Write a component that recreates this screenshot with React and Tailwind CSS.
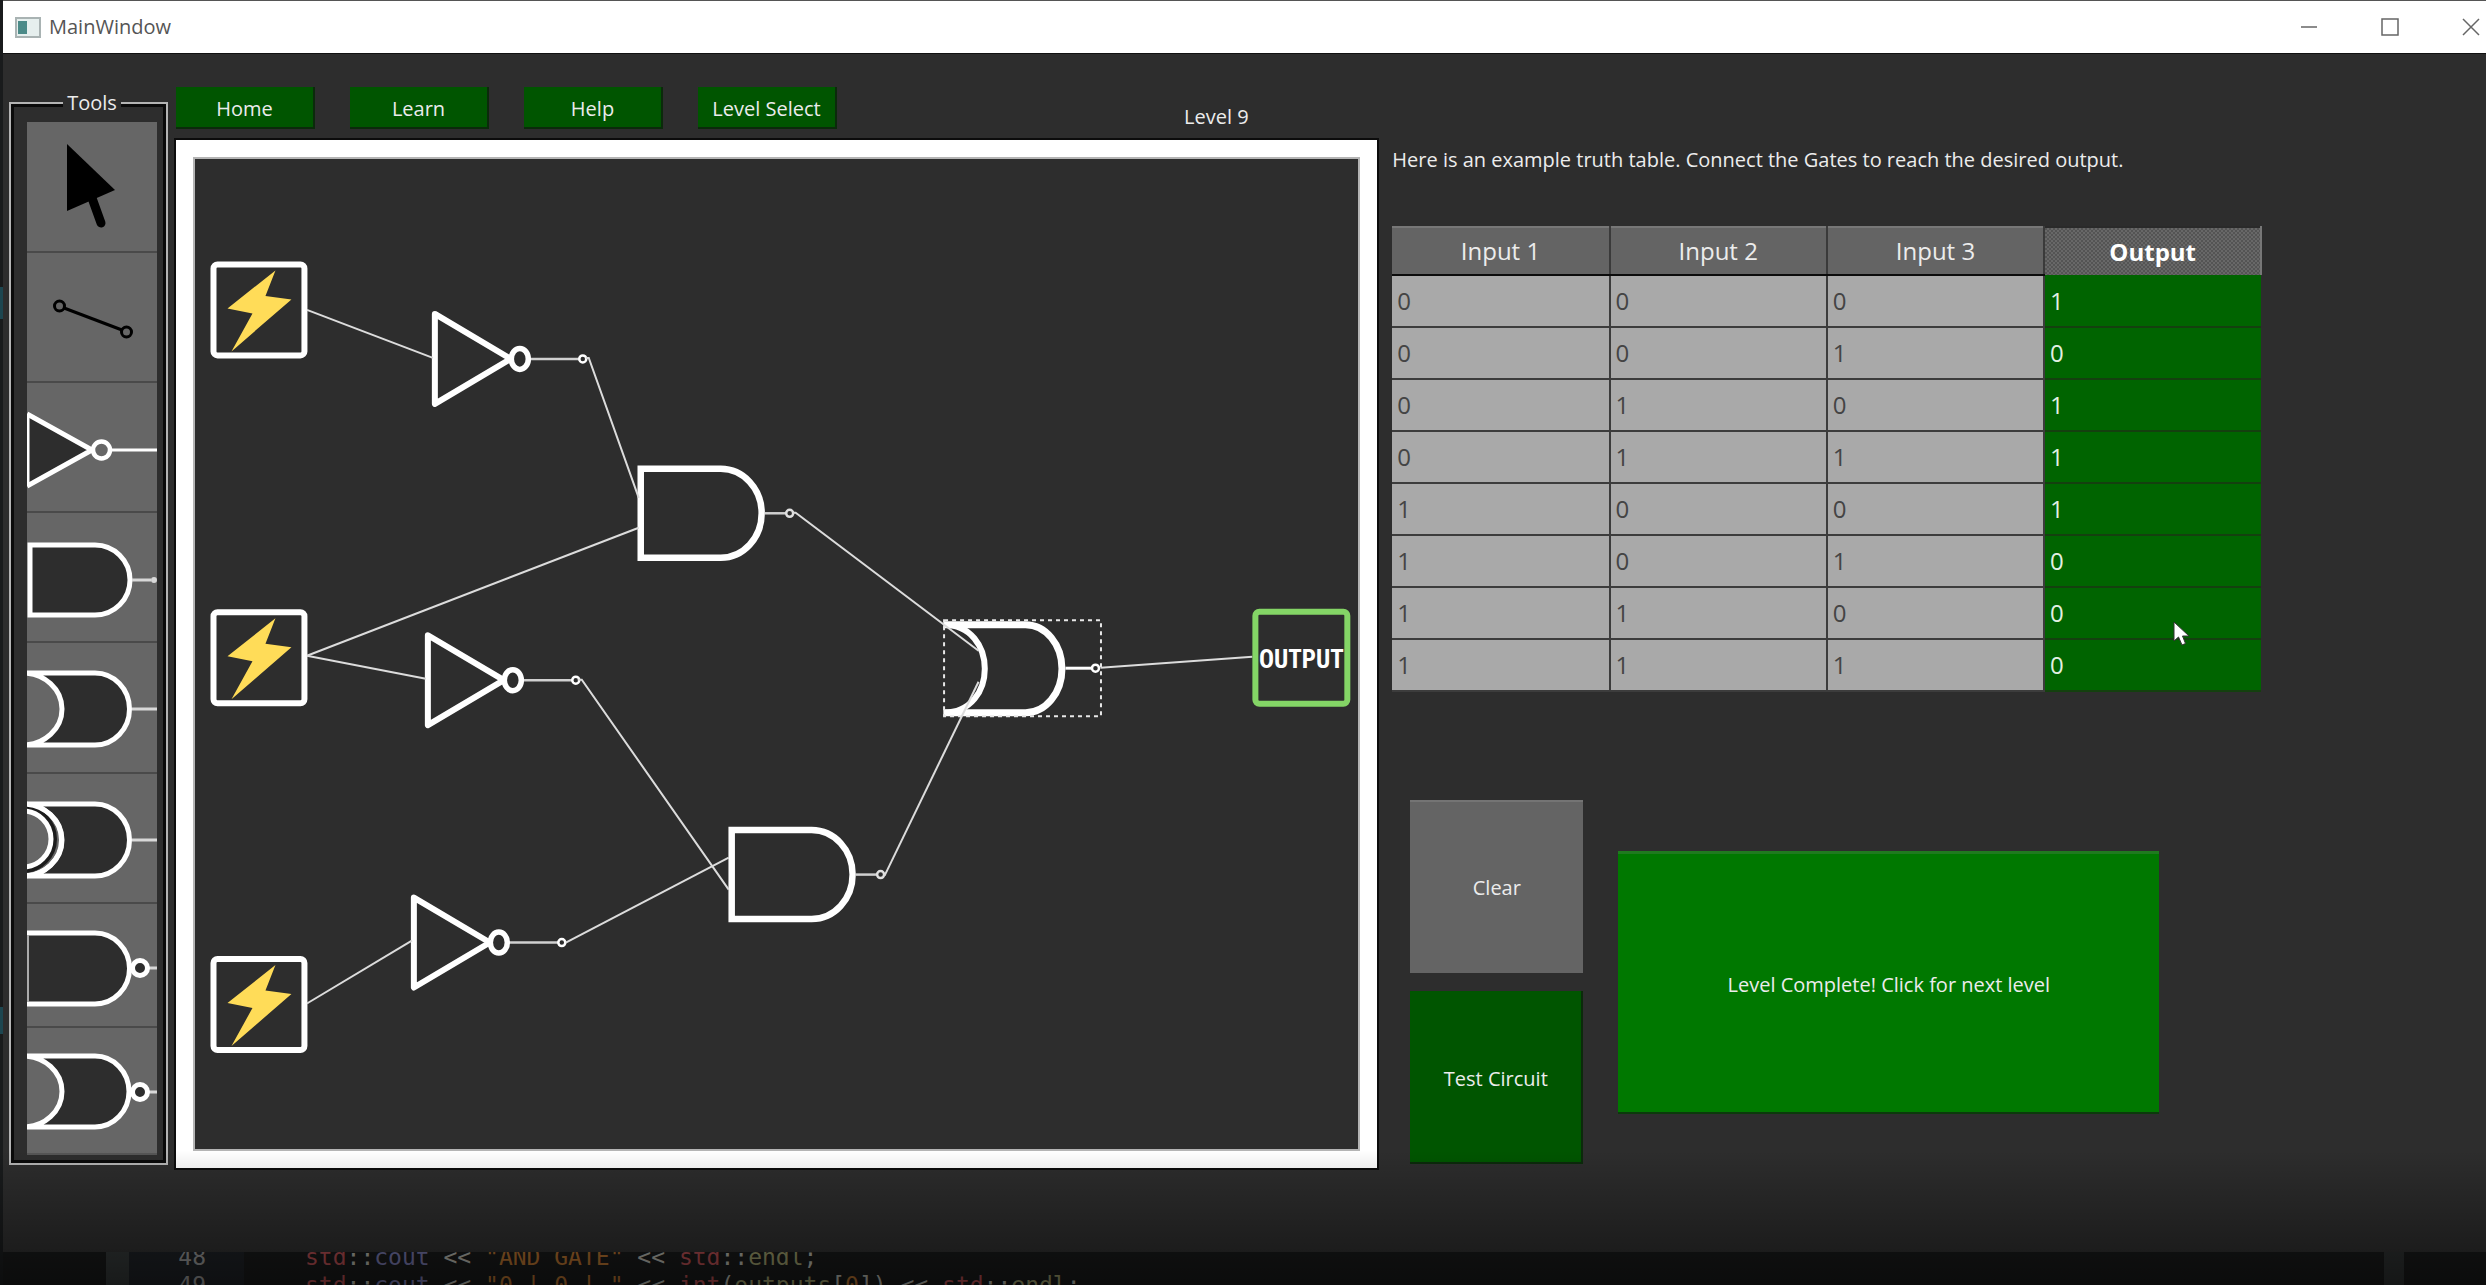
import React from "react";

const DARK = "#2d2d2d";

const NAV = ["Home", "Learn", "Help", "Level Select"];

const HEADERS = ["Input 1", "Input 2", "Input 3"];

const ROWS = [
  [0, 0, 0, 1],
  [0, 0, 1, 0],
  [0, 1, 0, 1],
  [0, 1, 1, 1],
  [1, 0, 0, 1],
  [1, 0, 1, 0],
  [1, 1, 0, 0],
  [1, 1, 1, 0],
];

function ToolArt({ kind }) {
  const line = { stroke: "#fff", strokeWidth: 5, fill: DARK };
  const lead = { stroke: "#d8d8d8", strokeWidth: 3 };
  switch (kind) {
    case "Select":
      return (
        <g>
          <path d="M40 22 L88 68 L40 89 Z" fill="#000" />
          <path d="M65 76 L74 101" stroke="#000" strokeWidth="9" strokeLinecap="round" />
        </g>
      );
    case "Wire":
      return (
        <g fill="none" stroke="#000" strokeWidth="3">
          <circle cx="32.5" cy="53" r="5" />
          <circle cx="99.5" cy="79" r="5" />
          <path d="M37 55 L95 77" />
        </g>
      );
    case "NOT":
      return (
        <g>
          <path d="M1 31 L65 67 L1 103 Z" fill={DARK} />
          <path d="M1 31 V103" stroke="#fff" strokeWidth="3" />
          <path d="M0 31 L65 67 L0 103" fill="none" stroke="#fff" strokeWidth="5" />
          <path d="M84 67 H130" stroke="#fff" strokeWidth="3" />
          <circle cx="74.5" cy="67" r="8.5" fill="#666" stroke="#fff" strokeWidth="4.5" />
        </g>
      );
    case "AND":
      return (
        <g>
          <path d="M3 32 H68 A35 35 0 0 1 68 102 H3 Z" {...line} />
          <path d="M105 67 H124" {...lead} />
          <circle cx="127" cy="67" r="2" fill="#d8d8d8" stroke="#d8d8d8" strokeWidth="2" />
        </g>
      );
    case "OR":
      return (
        <g>
          <path d="M-4 30 H68 A34.5 36 0 0 1 68 102 H-4 A39 36 0 0 0 -4 30 Z" {...line} />
          <path d="M105 66 H130" {...lead} />
        </g>
      );
    case "XOR":
      return (
        <g>
          <path d="M-4 30 H68 A34.5 36 0 0 1 68 102 H-4 A39 36 0 0 0 -4 30 Z" {...line} />
          <path d="M-4 37 A28 28 0 0 1 -4 93" fill="#666" stroke="#1d1d1d" strokeWidth="12" />
          <path d="M-4 30 A38.5 36 0 0 1 -4 102" fill="none" stroke="#fff" strokeWidth="5" />
          <path d="M-4 37 A28 28 0 0 1 -4 93" fill="#666" stroke="#fff" strokeWidth="5" />
          <path d="M105 66 H130" {...lead} />
        </g>
      );
    case "NAND":
      return (
        <g>
          <path d="M-6 29 H68 A34.5 35.5 0 0 1 68 100 H-6 Z" {...line} />
          <path d="M1 31 V98" stroke="#aaa" strokeWidth="2" />
          <path d="M121 64 H130" {...lead} />
          <circle cx="113" cy="64" r="7.5" fill={DARK} stroke="#fff" strokeWidth="5" />
        </g>
      );
    default:
      return (
        <g>
          <path d="M-4 28 H68 A34 35.5 0 0 1 68 99 H-4 A39 35.5 0 0 0 -4 28 Z" {...line} />
          <path d="M121 64 H130" {...lead} />
          <circle cx="113" cy="64" r="7.5" fill={DARK} stroke="#fff" strokeWidth="5" />
        </g>
      );
  }
}

const TOOLS = [
  { kind: "Select", size: "h-[131px]", h: 131 },
  { kind: "Wire", size: "h-[130px]", h: 130 },
  { kind: "NOT", size: "h-[130px]", h: 130 },
  { kind: "AND", size: "h-[130px]", h: 130 },
  { kind: "OR", size: "h-[131px]", h: 131 },
  { kind: "XOR", size: "h-[130px]", h: 130 },
  { kind: "NAND", size: "h-[124px]", h: 124 },
  { kind: "NOR", size: "h-[127px]", h: 127 },
];

function Source({ x, y }) {
  return (
    <g transform={`translate(${x} ${y})`}>
      <rect x="3" y="3" width="91" height="91" rx="4" fill={DARK} stroke="#fff" strokeWidth="6" />
      <path d="M65 9 L55 34.5 L81 38 L21 90 L42 52 L17 47 Z" fill="#ffdc58" />
    </g>
  );
}

function NotGate({ x, y }) {
  return (
    <g transform={`translate(${x} ${y})`} stroke="#fff" fill={DARK}>
      <path d="M0 -45 L76 0 L0 45 Z" strokeWidth="6" strokeLinejoin="round" />
      <path d="M95 0 H145" stroke="#d0d0d0" strokeWidth="2.5" />
      <ellipse cx="85" cy="0" rx="8.5" ry="10.5" strokeWidth="5.5" />
      <circle cx="148" cy="0" r="3.5" strokeWidth="2.5" />
    </g>
  );
}

function AndGate({ x, y }) {
  return (
    <g transform={`translate(${x} ${y})`} stroke="#fff" fill={DARK}>
      <path d="M0 -44.5 H80 A41 44.5 0 0 1 80 44.5 H0 Z" strokeWidth="6.5" />
      <path d="M124 0 H145" stroke="#d0d0d0" strokeWidth="2.5" />
      <circle cx="149" cy="0" r="3.5" strokeWidth="2.5" stroke="#e0e0e0" />
    </g>
  );
}

const WIRES = [
  "M307 309 L433 357",
  "M586 357 H589 L639 497",
  "M307 655 L639 527",
  "M307 655 L426 678",
  "M578 679 H582 L729 889",
  "M307 1003 L412 940",
  "M566 942 L729 857",
  "M793 512 H796 L979 650",
  "M885 875 L979 681",
  "M1101 667 L1253 656",
];

function Circuit() {
  return (
    <svg viewBox="195 158 1164 991" className="block h-auto w-full" role="img" aria-label="Circuit canvas">
      <Source x={210.5} y={260.5} />
      <Source x={210.5} y={608.5} />
      <Source x={210.5} y={955.5} />
      <NotGate x={435} y={358} />
      <NotGate x={428} y={679.5} />
      <NotGate x={414} y={942} />
      <AndGate x={641} y={512.5} />
      <AndGate x={732} y={874} />
      <g stroke="#fff" fill="none">
        <path d="M944 624 H1026 A36.5 44 0 0 1 1026 712 H944" strokeWidth="7" />
        <path d="M944 624 C999 624 999 712 944 712" strokeWidth="6" />
        <path d="M1066 667.5 H1092" strokeWidth="3" />
        <circle cx="1096" cy="667.5" r="3.5" strokeWidth="2.5" />
        <rect x="944.5" y="619.5" width="157" height="96" stroke="#e8e8e8" strokeWidth="2" strokeDasharray="4 4" />
      </g>
      <g stroke="#dcdcdc" strokeWidth="2" fill="none">
        {WIRES.map((d) => (
          <path key={d} d={d} />
        ))}
      </g>
      <rect x="1256" y="611" width="92" height="92" rx="4" fill={DARK} stroke="#84d566" strokeWidth="6" />
      <text
        x="1302"
        y="667"
        textAnchor="middle"
        fill="#fff"
        fontSize="25"
        fontWeight="700"
        fontFamily='"Liberation Sans Narrow", "Roboto Condensed", "Liberation Sans", sans-serif'
      >
        OUTPUT
      </text>
    </svg>
  );
}

function TitleBar() {
  return (
    <header className="flex h-[54px] items-center justify-between border-t border-b border-t-[#555] border-b-[#111] bg-white pl-3">
      <div className="flex items-center gap-2">
        <svg viewBox="0 0 26 21" className="h-[21px] w-[26px]" aria-hidden="true">
          <rect x="1" y="1" width="24" height="19" fill="#e6efee" stroke="#a9b3b3" strokeWidth="2" />
          <rect x="3" y="4" width="9" height="13" fill="#4b8a88" />
        </svg>
        <h1 className="text-[20px] text-[#555]">MainWindow</h1>
      </div>
      <div className="flex items-center gap-[57px] pr-[3px]">
        {[
          ["Minimize", "M2 11 H18"],
          ["Maximize", "M2 3 H18 V19 H2 Z"],
          ["Close", "M2 3 L18 19 M18 3 L2 19"],
        ].map(([label, d]) => (
          <button key={label} type="button" aria-label={label} className="w-6">
            <svg viewBox="0 0 20 22" className="mx-auto h-[22px] w-5" fill="none" stroke="#666" strokeWidth="1.5">
              <path d={d} />
            </svg>
          </button>
        ))}
      </div>
    </header>
  );
}

function TruthTable() {
  return (
    <div className="relative mt-[52px]">
      <table className="w-full table-fixed border-collapse text-2xl">
        <thead>
          <tr className="h-[48px]">
            {HEADERS.map((h) => (
              <th
                key={h}
                scope="col"
                className="border-t-2 border-r-2 border-b-2 border-t-[#777] border-r-[#3a3a3a] border-b-[#0c0c0c] bg-[#646464] p-0 font-normal"
              >
                {h}
              </th>
            ))}
            <th
              scope="col"
              className="border-t-2 border-r-2 border-t-[#2a2a2a] border-r-[#777] bg-[#5e5e5e] bg-[repeating-conic-gradient(#686868_0_25%,#545454_0_50%)] bg-[length:4px_4px] p-0 font-bold text-white"
            >
              Output
            </th>
          </tr>
        </thead>
        <tbody>
          {ROWS.map((row, r) => (
            <tr key={r} className="h-[52px]">
              {row.map((v, c) => (
                <td
                  key={c}
                  className={
                    c === 3
                      ? "border-b-2 border-[#14400f] bg-[#006400] py-0 pl-[5px] text-[#e2f0e2]"
                      : "border-r-2 border-b-2 border-[#3c3c3c] bg-[#a9a9a9] py-0 pl-[5px] text-[#444]"
                  }
                >
                  {v}
                </td>
              ))}
            </tr>
          ))}
        </tbody>
      </table>
      <svg viewBox="0 0 17 25" className="absolute top-[395px] left-[781px] h-[25px] w-[17px]" aria-hidden="true">
        <path d="M1 1 V20 L5.500 16 L9 24 L12.500 22.500 L9.500 15 H16 Z" fill="#fff" stroke="#333" />
      </svg>
    </div>
  );
}

function Editor() {
  return (
    <div className="flex h-[33px] overflow-hidden bg-[#171818] pl-[103px] font-['DejaVu_Sans_Mono',monospace] text-[23px] leading-[28px] text-[#a8a8a0]">
      <div className="w-[23px] bg-[#303434]" />
      <div className="w-[115px] bg-[#1c1f23] pr-[38px] text-right text-[#8a8a8a]">
        <div className="-mt-[9px]">48</div>
        <div>49</div>
      </div>
      <pre className="-mt-[9px] flex-1 pl-[61px] font-[inherit]">
        <span className="text-[#a8484c]">std</span>::<span className="text-[#6f6fa0]">cout</span>
        {" << "}
        <span className="text-[#a8692c]">"AND GATE"</span>
        {" << "}
        <span className="text-[#a8484c]">std</span>::<span className="text-[#8f8f62]">endl</span>;{"\n"}
        <span className="text-[#a8484c]">std</span>::<span className="text-[#6f6fa0]">cout</span>
        {" << "}
        <span className="text-[#a8692c]">"0 | 0 | "</span>
        {" << "}
        <span className="text-[#a8484c]">int</span>(<span className="text-[#8f8f62]">outputs</span>[
        <span className="text-[#a8692c]">0</span>]){" << "}
        <span className="text-[#a8484c]">std</span>::<span className="text-[#8f8f62]">endl</span>;
      </pre>
      <div className="mr-[82px] w-[20px] bg-[#2a2d2d]" />
    </div>
  );
}

export default function App() {
  return (
    <div className="relative flex min-h-screen bg-[#2d2d2d] font-['Open_Sans','Noto_Sans',sans-serif] text-[20px] leading-7 text-[#ececec]">
      <div className="flex w-[3px] flex-col bg-[#191b1c] pt-[287px]">
        <div className="h-[32px] bg-[#1d4650]" />
        <div className="mt-[688px] h-[27px] bg-[#1d4650]" />
      </div>
      <div className="flex flex-1 flex-col">
        <TitleBar />
        <main className="flex flex-1 gap-2 pt-[33px] pl-[6px]">
          <fieldset className="mt-[2px] h-fit border-2 border-[#b4b4b4] pr-[9px] pb-[8px] pl-[16px] shadow-[inset_0_0_0_3px_#0a0a0a]">
            <legend className="mx-auto bg-[#2d2d2d] px-1">Tools</legend>
            <div className="mt-[5px] flex w-[130px] flex-col">
              {TOOLS.map((t) => (
                <button
                  key={t.kind}
                  type="button"
                  aria-label={t.kind}
                  className={`${t.size} border-b-2 border-[#4a4a4a] bg-[#666] last:border-[#555]`}
                >
                  <svg viewBox={`0 0 130 ${t.h}`} className="-mb-[2px] block w-full">
                    <ToolArt kind={t.kind} />
                  </svg>
                </button>
              ))}
            </div>
          </fieldset>

          <section className="flex min-w-0 flex-[1205] flex-col">
            <div className="flex items-end gap-[35px]">
              {NAV.map((n) => (
                <button
                  key={n}
                  type="button"
                  className="h-[42px] w-[139px] border-r-2 border-b-2 border-[#0b2a0b] bg-[#005500] pt-1 whitespace-nowrap"
                >
                  {n}
                </button>
              ))}
              <p className="flex-1 pt-1 pl-[312px] leading-6">Level 9</p>
            </div>
            <div className="mt-[11px] border-[17px] border-white outline-2 outline-[#0c0c0c]">
              <div className="border-2 border-[#b4b4b4]">
                <Circuit />
              </div>
            </div>
          </section>

          <section className="min-w-0 flex-[1097] pt-[59px] pl-[7px]">
            <div className="w-[870px] max-w-full">
              <p>Here is an example truth table. Connect the Gates to reach the desired output.</p>
              <TruthTable />
              <div className="mt-[108px] flex items-center gap-[35px] pl-[18px]">
                <div className="flex flex-col gap-[18px]">
                  <button type="button" className="size-[173px] border-t-2 border-[#747474] bg-[#646464]">
                    Clear
                  </button>
                  <button type="button" className="size-[173px] border-r-2 border-b-2 border-[#0b2a0b] bg-[#005500] pt-1">
                    Test Circuit
                  </button>
                </div>
                <button
                  type="button"
                  className="h-[263px] w-[541px] border-t-3 border-b-2 border-t-[#1f7a1f] border-b-[#0b3a0b] bg-[#007800] pt-1"
                >
                  Level Complete! Click for next level
                </button>
              </div>
            </div>
          </section>
        </main>
        <Editor />
      </div>
      <div className="pointer-events-none absolute inset-x-0 bottom-0 h-[135px] bg-linear-to-b from-transparent to-black/50" />
    </div>
  );
}
